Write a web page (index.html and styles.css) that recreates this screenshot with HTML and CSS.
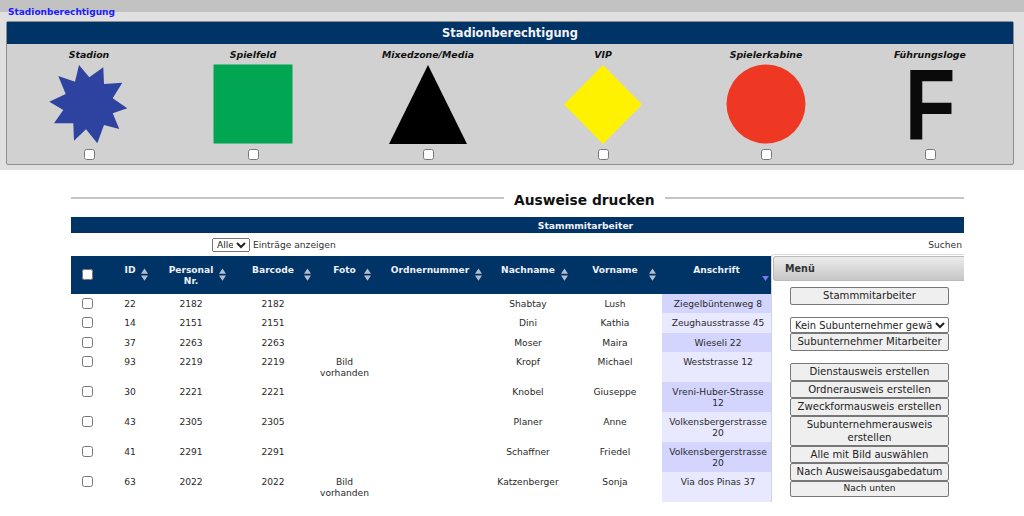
FILE: index.html
```html
<!DOCTYPE html>
<html lang="de">
<head>
<meta charset="utf-8">
<title>Ausweise drucken</title>
<link rel="stylesheet" href="styles.css">
</head>
<body>
<div class="band"></div>
<section class="perm">
  <div class="legend">Stadionberechtigung</div>
  <div class="panel">
    <h2 class="panel-head">Stadionberechtigung</h2>
    <div class="perm-grid">
      <div class="perm-cell">
        <div class="perm-label">Stadion</div>
        <svg class="shape" viewBox="1 0 80 80"><polygon fill="#2e42a0" points="31,1 41.3,13.3 55.3,3.3 56,20 74.3,18.7 64.7,34.3 79.3,44.3 64.7,49.3 71.3,65 56,61 49.3,79.3 38,65.3 26,76.7 25.3,59.3 6,59.3 15.3,46 1.3,37.7 17.7,30 10.3,12 27,17.7"/></svg>
        <input class="check" type="checkbox">
      </div>
      <div class="perm-cell">
        <div class="perm-label">Spielfeld</div>
        <svg class="shape" viewBox="0 0 80 80"><rect x="0.5" y="0.5" width="79" height="79" fill="#00a651"/></svg>
        <input class="check" type="checkbox">
      </div>
      <div class="perm-cell">
        <div class="perm-label">Mixedzone/Media</div>
        <svg class="shape" viewBox="0 0 80 80"><polygon fill="#000" points="40,1 79,80 1,80"/></svg>
        <input class="check" type="checkbox">
      </div>
      <div class="perm-cell">
        <div class="perm-label">VIP</div>
        <svg class="shape" viewBox="0 0 80 80"><polygon fill="#fff200" points="40,1 79,40.5 40,80 1,40.5"/></svg>
        <input class="check" type="checkbox">
      </div>
      <div class="perm-cell">
        <div class="perm-label">Spielerkabine</div>
        <svg class="shape" viewBox="0 0 80 80"><circle cx="40" cy="40" r="39.5" fill="#ee3824"/></svg>
        <input class="check" type="checkbox">
      </div>
      <div class="perm-cell">
        <div class="perm-label">Führungsloge</div>
        <div class="shape letter">F</div>
        <input class="check" type="checkbox">
      </div>
    </div>
  </div>
</section>

<main class="main">
  <div class="title-row"><span class="rule"></span><h1 class="title">Ausweise drucken</h1><span class="rule"></span></div>
  <div class="bar">Stammmitarbeiter</div>
  <div class="controls">
    <label class="length"><select class="length-select"><option>Alle</option></select> Einträge anzeigen</label>
    <span class="search">Suchen</span>
  </div>
  <div class="content">
    <div class="table-wrap">
      <table class="data">
        <colgroup><col class="c0"><col class="c1"><col class="c2"><col class="c3"><col class="c4"><col class="c5"><col class="c6"><col class="c7"><col class="c8"></colgroup>
        <thead>
          <tr>
            <th class="th-check"><input class="check head-check" type="checkbox"></th>
            <th>ID<svg class="sort" viewBox="0 0 8 14"><path d="M4 0l4 6H0zM4 14L0 8h8z"/></svg></th>
            <th>Personal Nr.<svg class="sort" viewBox="0 0 8 14"><path d="M4 0l4 6H0zM4 14L0 8h8z"/></svg></th>
            <th>Barcode<svg class="sort" viewBox="0 0 8 14"><path d="M4 0l4 6H0zM4 14L0 8h8z"/></svg></th>
            <th>Foto<svg class="sort" viewBox="0 0 8 14"><path d="M4 0l4 6H0zM4 14L0 8h8z"/></svg></th>
            <th>Ordnernummer<svg class="sort" viewBox="0 0 8 14"><path d="M4 0l4 6H0zM4 14L0 8h8z"/></svg></th>
            <th>Nachname<svg class="sort" viewBox="0 0 8 14"><path d="M4 0l4 6H0zM4 14L0 8h8z"/></svg></th>
            <th>Vorname<svg class="sort" viewBox="0 0 8 14"><path d="M4 0l4 6H0zM4 14L0 8h8z"/></svg></th>
            <th>Anschrift<svg class="sort active" viewBox="0 0 8 6"><path d="M4 6L0 0h8z"/></svg></th>
          </tr>
        </thead>
        <tbody>
          <tr class="one"><td class="td-check"><input class="check" type="checkbox"></td><td>22</td><td>2182</td><td>2182</td><td></td><td></td><td>Shabtay</td><td>Lush</td><td class="addr">Ziegelbüntenweg 8</td></tr>
          <tr class="one"><td class="td-check"><input class="check" type="checkbox"></td><td>14</td><td>2151</td><td>2151</td><td></td><td></td><td>Dini</td><td>Kathia</td><td class="addr">Zeughausstrasse 45</td></tr>
          <tr class="one"><td class="td-check"><input class="check" type="checkbox"></td><td>37</td><td>2263</td><td>2263</td><td></td><td></td><td>Moser</td><td>Maira</td><td class="addr">Wieseli 22</td></tr>
          <tr><td class="td-check"><input class="check" type="checkbox"></td><td>93</td><td>2219</td><td>2219</td><td>Bild<br>vorhanden</td><td></td><td>Kropf</td><td>Michael</td><td class="addr">Weststrasse 12</td></tr>
          <tr><td class="td-check"><input class="check" type="checkbox"></td><td>30</td><td>2221</td><td>2221</td><td></td><td></td><td>Knobel</td><td>Giuseppe</td><td class="addr">Vreni-Huber-Strasse<br>12</td></tr>
          <tr><td class="td-check"><input class="check" type="checkbox"></td><td>43</td><td>2305</td><td>2305</td><td></td><td></td><td>Planer</td><td>Anne</td><td class="addr">Volkensbergerstrasse<br>20</td></tr>
          <tr><td class="td-check"><input class="check" type="checkbox"></td><td>41</td><td>2291</td><td>2291</td><td></td><td></td><td>Schaffner</td><td>Friedel</td><td class="addr">Volkensbergerstrasse<br>20</td></tr>
          <tr><td class="td-check"><input class="check" type="checkbox"></td><td>63</td><td>2022</td><td>2022</td><td>Bild<br>vorhanden</td><td></td><td>Katzenberger</td><td>Sonja</td><td class="addr">Via dos Pinas 37</td></tr>
        </tbody>
      </table>
    </div>
    <aside class="menu">
      <div class="menu-head">Menü</div>
      <div class="menu-body">
        <div class="group"><button class="btn">Stammmitarbeiter</button></div>
        <div class="group">
          <select class="sub-select"><option>Kein Subunternehmer gewählt</option></select>
          <button class="btn">Subunternehmer Mitarbeiter</button>
        </div>
        <div class="group">
          <button class="btn">Dienstausweis erstellen</button>
          <button class="btn">Ordnerausweis erstellen</button>
          <button class="btn">Zweckformausweis erstellen</button>
          <button class="btn">Subunternehmerausweis erstellen</button>
          <button class="btn">Alle mit Bild auswählen</button>
          <button class="btn">Nach Ausweisausgabedatum</button>
          <button class="btn small">Nach unten</button>
        </div>
      </div>
    </aside>
  </div>
</main>
</body>
</html>
```

FILE: styles.css
```css
* { box-sizing: border-box; }
html, body { margin: 0; height: 516px; overflow: hidden; background: #fff; }
body { font-family: "DejaVu Sans", Verdana, sans-serif; font-size: 9.15px; color: #333; }

.band { height: 12px; background: #c2c2c2; }
.perm { display: flow-root; height: 158px; background: #e0e0e0; padding: 0 10px 0 6px; }
.legend { height: 9px; margin: -4px 0 4px 2px; font-weight: bold; font-size: 9px; line-height: 9px; color: #1a1aff; }
.panel { height: 144px; background: #d1d1d1; border: 1px solid #8e8e8e; border-radius: 2px; }
.panel-head { margin: 0; height: 22px; background: #003366; color: #f4f4f4; font-size: 11.45px; line-height: 22px; text-align: center; }
.perm-grid { display: grid; grid-template-columns: 164px 164px 186px 164px 162px 1fr; }
.perm-cell { display: flex; flex-direction: column; align-items: center; }
.perm-label { height: 20px; padding-top: 5px; font-size: 9.4px; line-height: 11px; font-weight: bold; font-style: italic; color: #111; }
.shape { display: block; width: 80px; height: 80px; }
.letter { font-family: "Liberation Sans", Arial, sans-serif; font-weight: bold; font-size: 100px; line-height: 80px; text-align: center; color: #0a0a0a; transform: scaleX(.83); }
.check { display: block; width: 11px; height: 11px; margin: 5px 0 0; }

.main { width: 893px; margin-left: 71px; padding-top: 20px; }
.title-row { display: grid; grid-template-columns: 433px auto 1fr; column-gap: 10px; align-items: center; height: 12px; }
.rule { height: 2px; background: #c4c4cc; }
.title { margin: 0; padding-top: 4px; font-size: 13.8px; line-height: 12px; color: #111; white-space: nowrap; }
.bar { margin-top: 15px; height: 16px; padding-left: 136px; background: #003366; color: #f0f0f5; font-weight: bold; font-size: 9.2px; line-height: 17px; text-align: center; }
.controls { display: flex; justify-content: space-between; align-items: center; height: 23px; padding: 0 2px 0 141px; }
.length-select { height: 14px; width: 38px; font: 9.1px "DejaVu Sans", sans-serif; padding: 0; color: #222; }

.content { display: flex; align-items: flex-start; }
.table-wrap { width: 700px; }
.data { width: 700px; table-layout: fixed; border-collapse: collapse; }
.c0 { width: 36px; } .c1 { width: 46px; } .c2 { width: 76px; } .c3 { width: 88px; } .c4 { width: 55px; }
.c5 { width: 116px; } .c6 { width: 80px; } .c7 { width: 94px; } .c8 { width: 109px; }
.data th { position: relative; height: 38px; padding: 9px 8px 0; vertical-align: top; background: #003366; color: #eef0f5; font-size: 9.1px; line-height: 11px; }
.th-check .check { margin: 4px 0 0 3px; background: #fff; }
.sort { position: absolute; top: 12px; right: 5px; width: 7px; height: 13px; fill: #b6bdc9; }
.data th:nth-child(3) .sort { right: 3px; }
.data th:nth-child(4) .sort { right: 6px; }
.data th:nth-child(5) .sort { right: 1px; }
.data th:nth-child(6) .sort { right: 6px; }
.data th:nth-child(7) .sort { right: 0; }
.data th:nth-child(8) .sort { right: 6px; }
.sort.active { top: 20px; right: 2px; height: 5px; fill: #7b7be0; }
.data td { height: 30px; padding: 5px 0 0; vertical-align: top; text-align: center; line-height: 11px; color: #2a2a2a; white-space: nowrap; }
.data tr.one td { height: 19.33px; }
.data .td-check { padding: 4px 0 0 11px; }
.td-check .check { margin: 0; }
.data .addr { padding-left: 3px; background: #e8e8ff; }
.data tbody tr:nth-child(odd) .addr { background: #d3d5ff; }

.menu { width: 193px; height: 248px; margin-top: -2px; background: #fff; border-left: 1px solid #d3d3de; border-top: 1px solid #d8d8d8; border-radius: 3px 0 0 0; padding-top: 1px; }
.menu-head { height: 25px; margin-left: 1px; padding-left: 11px; background: linear-gradient(#ececec, #c6c6c6); border: 1px solid #bbb; border-right: 0; border-radius: 3px 0 0 3px; font-weight: bold; font-size: 9.6px; line-height: 24px; color: #333; }
.menu-body { display: flex; flex-direction: column; row-gap: 12.5px; width: 159px; margin: 6px 0 0 18px; }
.group { display: flex; flex-direction: column; }
.btn { width: 159px; min-height: 17.5px; padding: 1px 2px; background: #efefef; border: 1px solid #777; border-radius: 2px; font: 10.1px/13px "DejaVu Sans", sans-serif; color: #222; text-align: center; }
.btn.small { min-height: 16px; font-size: 9px; line-height: 11px; }
.sub-select { width: 159px; height: 16px; padding: 0; background: #fff; border: 1px solid #777; border-radius: 2px; font: 9.9px "DejaVu Sans", sans-serif; color: #222; }
```
